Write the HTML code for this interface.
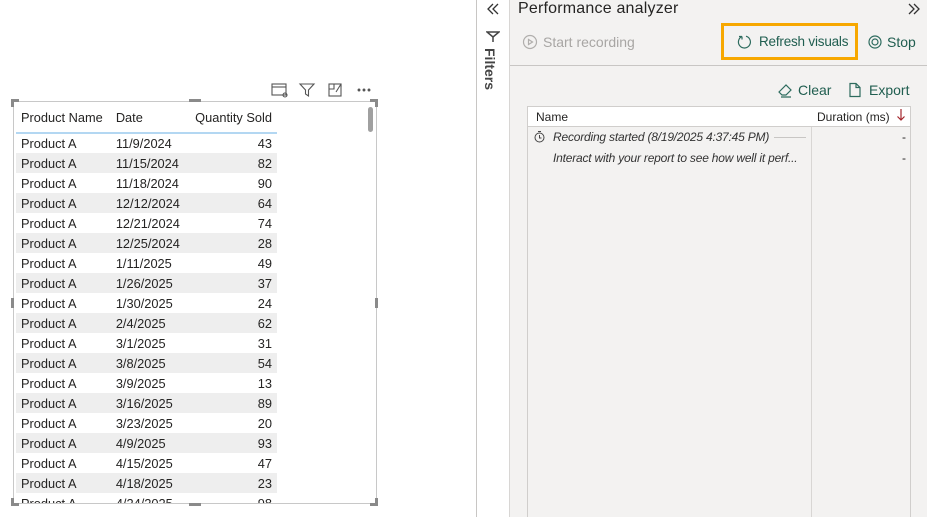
<!DOCTYPE html>
<html><head><meta charset="utf-8"><style>
*{box-sizing:border-box;margin:0;padding:0}
html,body{width:927px;height:517px;overflow:hidden}
body{background:#fff;font-family:"Liberation Sans",sans-serif;position:relative;color:#252423}
.abs{position:absolute}
.vis{left:13px;top:101px;width:364px;height:403px;border:1px solid #c8c8c8;overflow:hidden}
table{border-collapse:collapse;font-size:12.8px;position:absolute;left:2px;top:0;width:261px}
td{height:20px;padding:0 5px;white-space:nowrap}
th{height:31px;font-weight:normal;text-align:left;padding:0 5px;border-bottom:2px solid #b3d7f2}
tr:nth-child(odd) td{background:#eeeeee}
.r{text-align:right}
.h{background:#8a8a8a}
</style></head><body>
<svg class="abs" style="left:270px;top:82px" width="106" height="16" fill="none" stroke="#555" stroke-width="1.1">
<rect x="2" y="2" width="14" height="11"/><line x1="2" y1="5" x2="16" y2="5"/><circle cx="15" cy="13" r="2"/>
<path d="M30 2h14l-5.5 6v6l-3-2v-4z"/>
<rect x="59" y="2" width="12" height="12"/><path d="M64 2v5h-5M66 10l5-8M68 2h3v3"/>
<circle cx="89" cy="8" r=".9" fill="#555"/><circle cx="94" cy="8" r=".9" fill="#555"/><circle cx="99" cy="8" r=".9" fill="#555"/>
</svg>
<div class="abs vis">
<table>
<tr><th>Product Name</th><th>Date</th><th class="r" style="text-align:right">Quantity Sold</th></tr>
<tr><td>Product A</td><td>11/9/2024</td><td class="r">43</td></tr>
<tr><td>Product A</td><td>11/15/2024</td><td class="r">82</td></tr>
<tr><td>Product A</td><td>11/18/2024</td><td class="r">90</td></tr>
<tr><td>Product A</td><td>12/12/2024</td><td class="r">64</td></tr>
<tr><td>Product A</td><td>12/21/2024</td><td class="r">74</td></tr>
<tr><td>Product A</td><td>12/25/2024</td><td class="r">28</td></tr>
<tr><td>Product A</td><td>1/11/2025</td><td class="r">49</td></tr>
<tr><td>Product A</td><td>1/26/2025</td><td class="r">37</td></tr>
<tr><td>Product A</td><td>1/30/2025</td><td class="r">24</td></tr>
<tr><td>Product A</td><td>2/4/2025</td><td class="r">62</td></tr>
<tr><td>Product A</td><td>3/1/2025</td><td class="r">31</td></tr>
<tr><td>Product A</td><td>3/8/2025</td><td class="r">54</td></tr>
<tr><td>Product A</td><td>3/9/2025</td><td class="r">13</td></tr>
<tr><td>Product A</td><td>3/16/2025</td><td class="r">89</td></tr>
<tr><td>Product A</td><td>3/23/2025</td><td class="r">20</td></tr>
<tr><td>Product A</td><td>4/9/2025</td><td class="r">93</td></tr>
<tr><td>Product A</td><td>4/15/2025</td><td class="r">47</td></tr>
<tr><td>Product A</td><td>4/18/2025</td><td class="r">23</td></tr>
<tr><td>Product A</td><td>4/24/2025</td><td class="r">98</td></tr>
</table>
<div class="abs" style="left:354px;top:5px;width:5px;height:25px;border-radius:3px;background:#a0a0a0"></div>
</div>
<div class="abs h" style="left:11px;top:99px;width:8px;height:3px"></div><div class="abs h" style="left:11px;top:99px;width:3px;height:8px"></div>
<div class="abs h" style="left:370px;top:99px;width:8px;height:3px"></div><div class="abs h" style="left:375px;top:99px;width:3px;height:8px"></div>
<div class="abs h" style="left:11px;top:503px;width:8px;height:3px"></div><div class="abs h" style="left:11px;top:498px;width:3px;height:8px"></div>
<div class="abs h" style="left:370px;top:503px;width:8px;height:3px"></div><div class="abs h" style="left:375px;top:498px;width:3px;height:8px"></div>
<div class="abs h" style="left:189px;top:99px;width:12px;height:3px"></div><div class="abs h" style="left:189px;top:503px;width:12px;height:3px"></div>
<div class="abs h" style="left:11px;top:298px;width:3px;height:10px"></div><div class="abs h" style="left:375px;top:298px;width:3px;height:10px"></div>

<div class="abs" style="left:476px;top:0;width:1px;height:517px;background:#c8c6c4"></div>
<div class="abs" style="left:477px;top:0;width:32px;height:517px;background:#fff"></div>
<svg class="abs" style="left:486px;top:2px" width="14" height="14" fill="none" stroke="#333" stroke-width="1.3"><path d="M7 2L2 7l5 5M12 2L7 7l5 5"/></svg>
<svg class="abs" style="left:486px;top:30px" width="14" height="14" fill="none" stroke="#444" stroke-width="1.5"><path d="M1 2h12l-6 5z M7 7v5"/></svg>
<div class="abs" style="left:482px;top:48px;font-size:14px;font-weight:bold;color:#444;writing-mode:vertical-rl">Filters</div>
<div class="abs" style="left:509px;top:0;width:1px;height:517px;background:#d8d6d4"></div>

<div class="abs" style="left:510px;top:0;width:417px;height:517px;background:#f3f2f1"></div>
<div class="abs" style="left:518px;top:0px;font-size:16px;color:#252423;letter-spacing:.2px">Performance analyzer</div>
<svg class="abs" style="left:907px;top:2px" width="14" height="14" fill="none" stroke="#333" stroke-width="1.3"><path d="M2 2l5 5-5 5M7 2l5 5-5 5"/></svg>
<svg class="abs" style="left:522px;top:34px" width="16" height="16" fill="none" stroke="#b0aeac" stroke-width="1.2"><circle cx="8" cy="8" r="6.5"/><path d="M6.5 5.5v5l4-2.5z"/></svg>
<div class="abs" style="left:543px;top:34px;font-size:14px;color:#a8a6a4">Start recording</div>
<div class="abs" style="left:721px;top:23px;width:137px;height:37px;border:3px solid #f7a800"></div>
<svg class="abs" style="left:737px;top:34px" width="16" height="16" fill="none" stroke="#2d6b5e" stroke-width="1.2"><path d="M5 2.5A6 6 0 1 0 9 2.2M5 2.5v3M5 2.5H2"/></svg>
<div class="abs" style="left:759px;top:34px;font-size:13.5px;color:#205e50;letter-spacing:-.2px">Refresh visuals</div>
<svg class="abs" style="left:867px;top:34px" width="16" height="16" fill="none" stroke="#2d6b5e" stroke-width="1.2"><circle cx="8" cy="8" r="6"/><circle cx="8" cy="8" r="3"/></svg>
<div class="abs" style="left:887px;top:34px;font-size:14px;color:#205e50">Stop</div>
<div class="abs" style="left:510px;top:65px;width:417px;height:1px;background:#c8c6c4"></div>
<svg class="abs" style="left:777px;top:82px" width="16" height="16" fill="none" stroke="#2d6b5e" stroke-width="1.2"><path d="M2 10l7-7 5 5-5 5H5zM4 15h10"/></svg>
<div class="abs" style="left:798px;top:82px;font-size:14px;color:#205e50">Clear</div>
<svg class="abs" style="left:847px;top:82px" width="16" height="16" fill="none" stroke="#2d6b5e" stroke-width="1.2"><path d="M3 1.5h6l4 4v9H3zM9 1.5v4h4"/></svg>
<div class="abs" style="left:869px;top:82px;font-size:14px;color:#205e50">Export</div>
<div class="abs" style="left:527px;top:106px;width:384px;height:420px;border:1px solid #d0cecc;background:#f3f2f1"></div>
<div class="abs" style="left:528px;top:107px;width:382px;height:20px;background:#fff;border-bottom:1px solid #d0cecc"></div>
<div class="abs" style="left:811px;top:127px;width:1px;height:400px;background:#d8d6d4"></div>
<div class="abs" style="left:536px;top:110px;font-size:12px">Name</div>
<div class="abs" style="left:817px;top:110px;font-size:12px">Duration (ms)</div>
<svg class="abs" style="left:896px;top:108px" width="10" height="14" fill="none" stroke="#a4262c" stroke-width="1.2"><path d="M5 1v11M1.5 8.5L5 12l3.5-3.5"/></svg>
<svg class="abs" style="left:533px;top:130px" width="13" height="13" fill="none" stroke="#444" stroke-width="1"><circle cx="6.5" cy="7.5" r="4.5"/><path d="M6.5 5v3h2M5 1.5h3"/></svg>
<div class="abs" style="left:553px;top:130px;font-size:12px;font-style:italic;color:#333;letter-spacing:-.2px">Recording started (8/19/2025 4:37:45 PM)</div>
<div class="abs" style="left:774px;top:137px;width:32px;height:1px;background:#c8c6c4"></div>
<div class="abs" style="left:553px;top:151px;font-size:12px;font-style:italic;color:#333;letter-spacing:-.2px">Interact with your report to see how well it perf...</div>
<div class="abs" style="left:902px;top:130px;font-size:12px">-</div>
<div class="abs" style="left:902px;top:151px;font-size:12px">-</div>
</body></html>
